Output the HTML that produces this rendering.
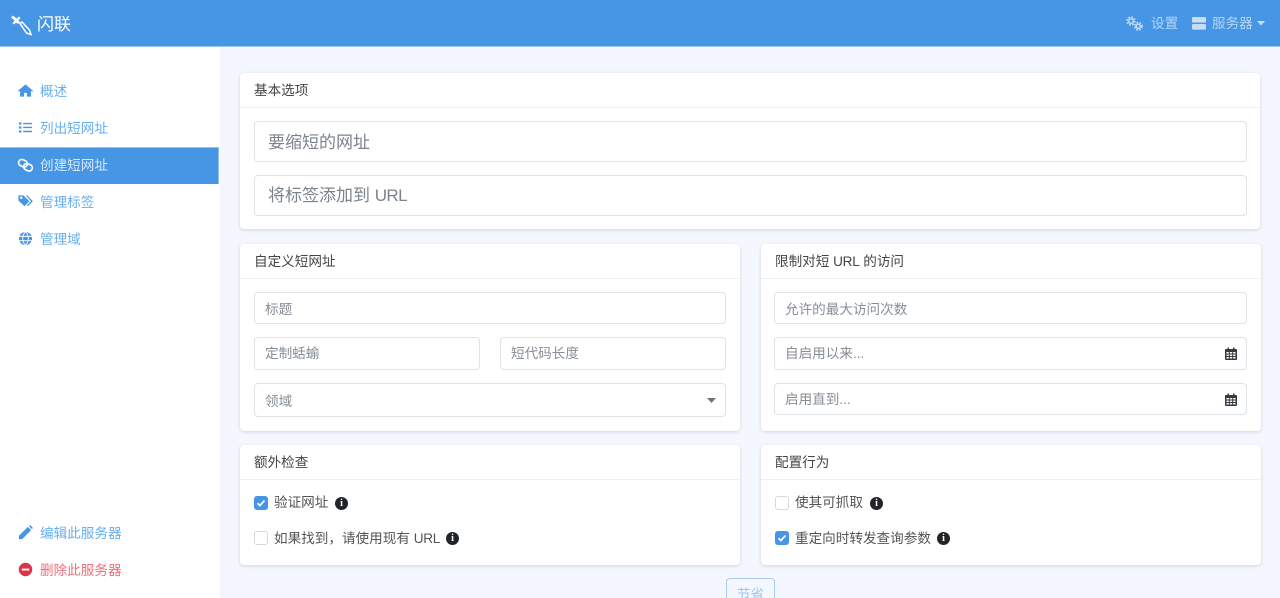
<!DOCTYPE html>
<html lang="zh"><head><meta charset="utf-8"><title>闪联</title>
<style>
*{box-sizing:border-box}
html,body{margin:0;padding:0;width:1280px;height:598px;overflow:hidden;background:#f5f7fe;font-family:"Liberation Sans","Noto Sans CJK SC",sans-serif;font-size:13.6px;color:#555}
#w{position:relative;width:1280px;height:598px;overflow:hidden}
.a{position:absolute}
.nav{left:0;top:0;width:1280px;height:47px;background:#4696e5;border-bottom:1px solid #9cc6f0}
.t{position:absolute;white-space:nowrap;line-height:20px}
.side{left:0;top:47px;width:220px;height:551px;background:#fff}
.item{position:absolute;left:0;width:219px;height:37px;color:#67aef0;font-size:13.6px;line-height:38px;padding-left:40px}
.item svg{position:absolute;left:18px;top:10px;width:15px;height:15px;fill:#4696e5}
.item.on{background:#4696e5;color:#d7e8fa;border-top:1px solid #8fc0ef;border-right:1px solid #8fc0ef;line-height:35px}
.item.on svg{fill:#fff}
.card{position:absolute;background:#fff;border-radius:4px;box-shadow:0 1px 3px rgba(60,70,110,.2)}
.hd{position:absolute;left:0;right:0;top:0;height:35px;border-bottom:1px solid #eef0f2;color:#444;line-height:35px;padding-left:14px;font-size:13.6px}
.in{position:absolute;background:#fff;border:1px solid #dfe2e6;border-radius:4px;color:#868e96;padding-left:10px;font-size:13.6px;white-space:nowrap}
.lg{font-size:17px;padding-left:13px;color:#7b838b}
.cb{position:absolute;width:14px;height:14px;border-radius:3px;border:1px solid #d5d8dc;background:#fff}
.cb.c{background:#4696e5;border-color:#4696e5}
.cb.c svg{position:absolute;left:1px;top:1px;width:10px;height:10px}
.info{position:absolute;width:13px;height:13px;border-radius:50%;background:#212529;color:#fff;font:bold 10px/13px "Liberation Serif",serif;text-align:center}
.cal{position:absolute;width:12px;height:13px}
.u{letter-spacing:-.3px}
.u2{letter-spacing:-.6px}
</style></head>
<body><div id="w">
<div class="a nav">
<svg class="a" style="left:11px;top:15px" width="21" height="21" viewBox="0 0 21 21"><path d="M0 2.500L2 .5l3.500 3L8 1.500l1.500 1.500-2 2.500 1.500 1.500-2 2-2-1.500L3 9.500 1.500 8l2.200-2.500z" fill="#fff"/><path d="M9 8.500l2-1.500 7.500 8 1.500 4.500-4.500-1.500z" fill="none" stroke="#fff" stroke-width="1.500"/></svg>
<div class="t" style="left:37px;top:13px;font-size:17px;color:#fff;line-height:23px">闪联</div>
<svg class="a" style="left:1126px;top:16px" width="17" height="15" viewBox="0 0 17 15"><circle cx="5" cy="5" r="3.800" fill="none" stroke="#c0dbf6" stroke-width="1.800" stroke-dasharray="1.700 1.300"/><circle cx="5" cy="5" r="2.300" fill="none" stroke="#c0dbf6" stroke-width="1.500"/><circle cx="12.300" cy="10.300" r="3.600" fill="none" stroke="#c0dbf6" stroke-width="1.800" stroke-dasharray="1.700 1.300"/><circle cx="12.300" cy="10.300" r="2.100" fill="none" stroke="#c0dbf6" stroke-width="1.500"/></svg>
<div class="t" style="left:1151px;top:14px;color:#b5d5f5">设置</div>
<svg class="a" style="left:1192px;top:17px" width="14" height="13" viewBox="0 0 14 13"><rect width="14" height="5.600" rx="1" fill="#c6def7"/><rect y="7" width="14" height="5.600" rx="1" fill="#c6def7"/></svg>
<div class="t" style="left:1212px;top:14px;color:#b5d5f5">服务器</div>
<svg class="a" style="left:1257px;top:21px" width="8" height="5" viewBox="0 0 8 5"><path d="M0 0h8L4 4.500z" fill="#c6def7"/></svg>
</div>

<div class="a side"></div>
<div class="item" style="top:73px"><svg viewBox="0 0 16 16"><path d="M8 1.500L0 8.300l.9 1L2.200 8.300v6.200h4.300v-4h3v4h4.300V8.300l1.300 1 .9-1z"/></svg>概述</div>
<div class="item" style="top:110px"><svg viewBox="0 0 16 16"><path d="M1 2.500h2.600v2.400H1zM1 6.800h2.600v2.400H1zM1 11.100h2.600v2.400H1zM5.500 3h9.500v1.500H5.500zM5.500 7.200h9.500v1.500H5.500zM5.500 11.500h9.500V13H5.500z"/></svg>列出短网址</div>
<div class="item on" style="top:147px"><svg style="top:10px;left:17px;width:17px;height:15px;fill:none;stroke:#fff;stroke-width:1.600" viewBox="0 0 17 15"><rect x="1.500" y="2" width="9" height="6.500" rx="3.200" transform="rotate(25 6 5.200)"/><rect x="6.500" y="6" width="9" height="6.500" rx="3.200" transform="rotate(25 11 9.200)"/></svg>创建短网址</div>
<div class="item" style="top:184px"><svg viewBox="0 0 16 16"><path d="M.5 1.500h5.300l6.200 6.200-5 5.300L.5 7zM3.500 5.300a1.300 1.300 0 100-2.600 1.300 1.300 0 000 2.600z" fill-rule="evenodd"/><path d="M8.300 1.500h1.500l6 6.200-5.200 5.300-1-1 4.200-4.300z"/></svg>管理标签</div>
<div class="item" style="top:221px"><svg viewBox="0 0 16 16"><circle cx="8" cy="8" r="7"/><path d="M1 5.700h14M1 10.300h14M8 1c-4 3.500-4 10.500 0 14M8 1c4 3.500 4 10.500 0 14" fill="none" stroke="#fff" stroke-width="1"/></svg>管理域</div>
<div class="item" style="top:515px"><svg viewBox="0 0 16 16"><path d="M1 11.500L10.500 2l3.500 3.500L4.500 15H1zM11.500 1l1-.500a1 1 0 011.200.200l1.600 1.600a1 1 0 01.200 1.200l-.5 1z"/></svg>编辑此服务器</div>
<div class="item" style="top:552px;color:#ee6f7e"><svg style="fill:#dc3545" viewBox="0 0 16 16"><path fill-rule="evenodd" d="M8 .800a7.200 7.200 0 100 14.400A7.200 7.200 0 008 .800zM4 7h8v2H4z"/></svg>删除此服务器</div>

<!-- card 1 -->
<div class="card" style="left:240px;top:73px;width:1020px;height:156px"><div class="hd">基本选项</div>
<div class="in lg" style="left:14px;top:48px;width:993px;height:41px;line-height:41px">要缩短的网址</div>
<div class="in lg" style="left:14px;top:102px;width:993px;height:41px;line-height:39px">将标签添加到 <span class="u2">URL</span></div>
</div>

<!-- card 2 -->
<div class="card" style="left:240px;top:244px;width:500px;height:187px"><div class="hd">自定义短网址</div>
<div class="in" style="left:14px;top:48px;width:472px;height:32px;line-height:33px">标题</div>
<div class="in" style="left:14px;top:93px;width:226px;height:33px;line-height:32px">定制蛞蝓</div>
<div class="in" style="left:260px;top:93px;width:226px;height:33px;line-height:32px">短代码长度</div>
<div class="in" style="left:14px;top:139px;width:472px;height:34px;line-height:35px">领域
<svg class="a" style="right:9px;top:14px" width="9" height="5" viewBox="0 0 9 5"><path d="M0 0h9L4.500 5z" fill="#6c757d"/></svg></div>
</div>

<!-- card 3 -->
<div class="card" style="left:761px;top:244px;width:500px;height:187px"><div class="hd">限制对短 <span class="u">URL</span> 的访问</div>
<div class="in" style="left:13px;top:48px;width:473px;height:32px;line-height:33px">允许的最大访问次数</div>
<div class="in" style="left:13px;top:93px;width:473px;height:33px;line-height:32px">自启用以来...
<svg class="cal" style="right:9px;top:9px" viewBox="0 0 12 13"><path fill-rule="evenodd" fill="#343a40" d="M1 2h1.500V.500h1.500V2h4V.500h1.500V2H11a1 1 0 011 1v9a1 1 0 01-1 1H1a1 1 0 01-1-1V3a1 1 0 011-1zM1.500 5v1.500h2.300V5zM4.800 5v1.500h2.400V5zM8.200 5v1.500h2.300V5zM1.500 7.500V9h2.300V7.500zM4.800 7.500V9h2.400V7.500zM8.200 7.500V9h2.300V7.500zM1.500 10v1.500h2.300V10zM4.800 10v1.500h2.400V10zM8.200 10v1.500h2.300V10z"/></svg></div>
<div class="in" style="left:13px;top:139px;width:473px;height:32px;line-height:31px">启用直到...
<svg class="cal" style="right:9px;top:9px" viewBox="0 0 12 13"><path fill-rule="evenodd" fill="#343a40" d="M1 2h1.500V.500h1.500V2h4V.500h1.500V2H11a1 1 0 011 1v9a1 1 0 01-1 1H1a1 1 0 01-1-1V3a1 1 0 011-1zM1.500 5v1.500h2.300V5zM4.800 5v1.500h2.400V5zM8.200 5v1.500h2.300V5zM1.500 7.500V9h2.300V7.500zM4.800 7.500V9h2.400V7.500zM8.200 7.500V9h2.300V7.500zM1.500 10v1.500h2.300V10zM4.800 10v1.500h2.400V10zM8.200 10v1.500h2.300V10z"/></svg></div>
</div>

<!-- card 4 -->
<div class="card" style="left:240px;top:445px;width:500px;height:120px"><div class="hd">额外检查</div>
<div class="cb c" style="left:14px;top:51px"><svg viewBox="0 0 10 10"><path d="M1.500 5.200l2.400 2.300 4.600-5" fill="none" stroke="#fff" stroke-width="1.700"/></svg></div>
<div class="t" style="left:34px;top:48px">验证网址</div><div class="info" style="left:95px;top:52px">i</div>
<div class="cb" style="left:14px;top:86px"></div>
<div class="t" style="left:34px;top:84px">如果找到，请使用现有 <span class="u">URL</span></div><div class="info" style="left:206px;top:87px">i</div>
</div>

<!-- card 5 -->
<div class="card" style="left:761px;top:445px;width:500px;height:120px"><div class="hd">配置行为</div>
<div class="cb" style="left:14px;top:51px"></div>
<div class="t" style="left:34px;top:48px">使其可抓取</div><div class="info" style="left:109px;top:52px">i</div>
<div class="cb c" style="left:14px;top:86px"><svg viewBox="0 0 10 10"><path d="M1.500 5.200l2.400 2.300 4.600-5" fill="none" stroke="#fff" stroke-width="1.700"/></svg></div>
<div class="t" style="left:34px;top:84px">重定向时转发查询参数</div><div class="info" style="left:176px;top:87px">i</div>
</div>

<div class="a" style="left:726px;top:578px;width:49px;height:20px;border:1px solid #a9cdf2;border-bottom:0;border-radius:4px 4px 0 0;color:#9cc6f0;text-align:center;line-height:32px;font-size:13.6px;overflow:hidden">节省</div>
</div></body></html>
